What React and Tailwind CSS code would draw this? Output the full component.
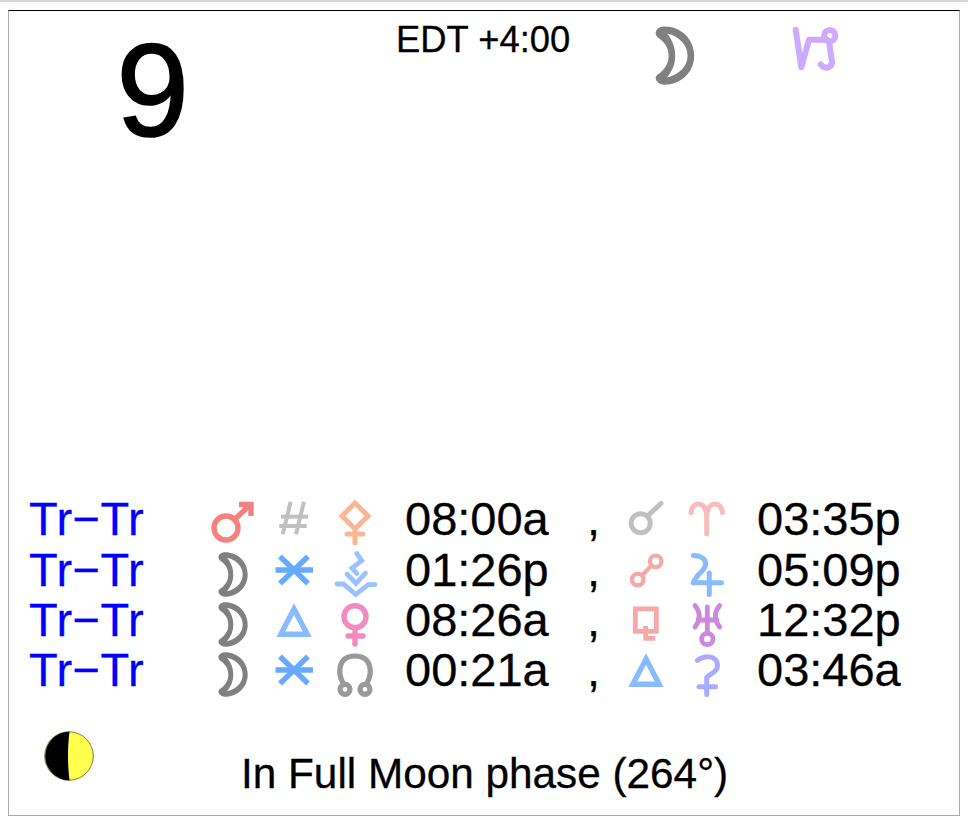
const font = { fontFamily: '"Liberation Sans", Arial, sans-serif' };

const Moon = () => (
  <path fillRule="evenodd" fill="#808080" d="M23 6.3 C36 6.3 45.7 16 45.7 28.7 C45.7 41 36 50.7 23 50.7 C19 50.7 16 47.5 16.5 45 C17 43 18.5 42.5 20 41.5 C24 38 26.3 34 26.3 28.7 C26.3 23 24 19.5 20 16 C18.5 15 17 14 16.5 12 C16 9 19 6.3 23 6.3 Z M25 11.8 C35 14 40.7 21 40.7 28.7 C40.7 36 35 43 25 45.2 C29.5 40 31.3 34.5 31.3 28.7 C31.3 23 29.5 17 25 11.8 Z" />
);
const Sextile = () => (
  <g fill="none" stroke="#66aaff" strokeWidth="5.4">
    <path d="M11.5 24 H49" />
    <path d="M16 10.5 L44 37.5" />
    <path d="M44 10.5 L16 37.5" />
  </g>
);
const Trine = () => (
  <path d="M30 13 L43.2 38.3 H16.8 Z" fill="none" stroke="#88bbff" strokeWidth="5.4" />
);

const G = {
  mars: (
    <g fill="none" stroke="#f58080" strokeWidth="5.4">
      <circle cx="24" cy="33" r="12" />
      <path d="M33 24 L48 10" />
      <path d="M37 9.5 H49 V21" />
    </g>
  ),
  hash: (
    <g fill="none" stroke="#c0c0c0" strokeWidth="4">
      <path d="M26.7 6.7 L18.7 39.3" />
      <path d="M40 6.7 L32 39.3" />
      <path d="M17 21.7 H44" />
      <path d="M15.3 31 H42.7" />
    </g>
  ),
  pallas: (
    <g fill="none" stroke="#f7b795" strokeWidth="5" strokeLinecap="round">
      <path d="M30 8 L43 21 L30 34 L17 21 Z" />
      <path d="M30 35 V48" />
      <path d="M22 39 H38" />
    </g>
  ),
  moon: <Moon />,
  sextile: <Sextile />,
  trine: <Trine />,
  chevrons: (
    <g fill="none" stroke="#99c2ff" strokeWidth="4.8" strokeLinecap="round">
      <path d="M31.7 7.5 L36.7 14.6 L27 22 L31.7 27.5" />
      <path d="M22 28 L31 37.5 L40.5 27" />
      <path d="M12 38 H18.5 L30.7 48.5 L43.3 38.6 H50" />
    </g>
  ),
  venus: (
    <g fill="none" stroke="#f28cc0" strokeWidth="5.4" strokeLinecap="round">
      <circle cx="30" cy="20.7" r="11" />
      <path d="M30 33 V48" />
      <path d="M23 40 H38" />
    </g>
  ),
  node: (
    <g fill="none" stroke="#999999" strokeWidth="5.2">
      <circle cx="20" cy="43.3" r="5" />
      <circle cx="40" cy="43.3" r="5" />
      <path d="M18.5 38 C12 27 13 10 30 10 C47 10 48 27 41.5 38" />
    </g>
  ),
  chiron: (
    <g fill="none" stroke="#c0c0c0" strokeWidth="5" strokeLinecap="round">
      <circle cx="24.7" cy="28.3" r="9.5" />
      <path d="M31.5 21 L45 8.5" />
    </g>
  ),
  aries: (
    <g fill="none" stroke="#f9bcbc" strokeWidth="5" strokeLinecap="round">
      <path d="M29.7 39 V21 C29 12 25 9 21.5 9 C17.5 9 14.5 12 14 17.5" />
      <path d="M29.7 21 C30.4 12 34.4 9 37.9 9 C41.9 9 44.9 12 45.4 17.5" />
    </g>
  ),
  opposition: (
    <g fill="none" stroke="#f5a8a8" strokeWidth="4.2">
      <circle cx="21.7" cy="33.6" r="5.8" />
      <circle cx="39.7" cy="15.3" r="5.8" />
      <path d="M25.8 29.5 L35.6 19.4" />
    </g>
  ),
  jupiter: (
    <g fill="none" stroke="#88bbff" strokeWidth="5" strokeLinecap="round" strokeLinejoin="round">
      <path d="M16.3 9.6 C24 9.5 29.5 13 28.5 19 C27.5 25 18 30 16.3 36.8 H44.5" />
      <path d="M32.3 27 V48.5" />
    </g>
  ),
  quincunx: (
    <g fill="none" stroke="#f7a9a9" strokeWidth="4.8">
      <path d="M19.3 12.8 H40.3 V35.3 H19.3 Z" />
      <path d="M29.7 30 V42.3 H39.3" />
    </g>
  ),
  uranus: (
    <g fill="none" stroke="#cc88dd" strokeWidth="4.8" strokeLinecap="round">
      <path d="M18 9.5 Q26.5 20 18 31" />
      <path d="M42.6 9.5 Q34.1 20 42.6 31" />
      <path d="M30.3 11 V36.5" />
      <path d="M21 24 H40" />
      <circle cx="30.3" cy="43" r="5.7" />
    </g>
  ),
  hook: (
    <g fill="none" stroke="#aaaaff" strokeWidth="5" strokeLinecap="round">
      <path d="M20.3 14.5 C24 10.5 40.5 7 40.5 20 C40.5 26.5 32 28 29.7 31.5 V48.5" />
      <path d="M22 40.7 H38.5" />
    </g>
  ),
};

const Glyph = ({ name }) => (
  <svg viewBox="0 0 60 50" className="w-[60px] h-[50px] shrink-0 overflow-visible">
    {G[name]}
  </svg>
);

const rows = [
  ["mars", "hash", "pallas", "08:00a", "chiron", "aries", "03:35p"],
  ["moon", "sextile", "chevrons", "01:26p", "opposition", "jupiter", "05:09p"],
  ["moon", "trine", "venus", "08:26a", "quincunx", "uranus", "12:32p"],
  ["moon", "sextile", "node", "00:21a", "trine", "hook", "03:46a"],
];

export default function App() {
  return (
    <div className="w-[968px] h-[824px] bg-white overflow-hidden text-black" style={font}>
      <div className="h-[2px] bg-[#d4d4d4]" />
      <div className="mt-[8px] ml-[8px] w-[952px] h-[806px] border border-[#aaaaaa] border-t-black flex flex-col">
        <div className="h-[484px] shrink-0 flex items-start">
          <div className="w-[180px] shrink-0 text-right text-[131px] leading-none mt-[14px] [-webkit-text-stroke:1.6px_black]">9</div>
          <div className="ml-[207px] w-[200px] shrink-0 text-[36.4px] leading-none mt-[11px] whitespace-nowrap [-webkit-text-stroke:0.3px_black]">EDT +4:00</div>
          <svg viewBox="0 0 60 50" className="w-[79px] h-[66px] shrink-0 overflow-visible ml-[38px] mt-[7px]">
            <Moon />
          </svg>
          <svg viewBox="0 0 60 60" className="w-[60px] h-[60px] shrink-0 ml-[66px] mt-[8px]">
            <g fill="none" stroke="#ccaaff" strokeWidth="6" strokeLinecap="round" strokeLinejoin="round">
              <path d="M16.7 10.7 L22.3 48.3 L30 20.7 H48" />
              <circle cx="50.7" cy="16.7" r="5.6" />
              <path d="M50 23 L53 42 C53.5 49 46 51 41.7 45.5" />
            </g>
          </svg>
        </div>
        {rows.map((r, i) => (
          <div key={i} className="h-[50.4px] shrink-0 flex items-center text-[47px] leading-[50px] whitespace-nowrap [-webkit-text-stroke:0.3px_black]">
            <div className="w-[193px] shrink-0 pl-[20px] text-[47px] tracking-[0.5px] text-[#0000ff] [-webkit-text-stroke:0.3px_#0000ff] -mt-[2px]">Tr−Tr</div>
            <Glyph name={r[0]} />
            <div className="ml-[2px]"><Glyph name={r[1]} /></div>
            <div className="ml-[1px]"><Glyph name={r[2]} /></div>
            <div className="ml-[20px] w-[182px] shrink-0 -mt-[2px]">{r[3]}</div>
            <div className="w-[29px] shrink-0 -mt-[2px]">,</div>
            <Glyph name={r[4]} />
            <div className="ml-[1px]"><Glyph name={r[5]} /></div>
            <div className="ml-[20px] -mt-[2px]">{r[6]}</div>
          </div>
        ))}
        <div className="flex items-start mt-[34px]">
          <svg viewBox="0 0 50 50" className="w-[50px] h-[50px] shrink-0 ml-[35px]">
            <circle cx="25" cy="25" r="24.3" fill="#ffff4d" stroke="#555533" strokeWidth="0.8" />
            <path d="M25.5 0.7 C23.5 16 23.5 34 25.5 49.3 A24.3 24.3 0 0 1 25.5 0.7 Z" fill="#000000" />
          </svg>
          <div className="ml-[147px] mt-[20px] text-[42.3px] leading-[46px] whitespace-nowrap [-webkit-text-stroke:0.3px_black]">In Full Moon phase (264°)</div>
        </div>
      </div>
    </div>
  );
}
